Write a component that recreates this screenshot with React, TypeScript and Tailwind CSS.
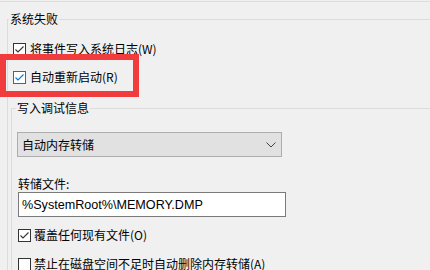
import React from "react";

const cjk = { fontFamily: '"Noto Sans CJK SC", "Noto Sans", sans-serif' };

function Check({ checked, focused }: { checked: boolean; focused?: boolean }) {
  const color = focused ? "#0078d7" : "#333333";
  return (
    <span
      className="flex h-[13px] w-[13px] shrink-0 items-center justify-center border bg-white"
      style={{ borderColor: color }}
    >
      {checked && (
        <svg width="11" height="11" viewBox="0 0 11 11">
          <path d="M1.5 5.5 L4 8 L9.5 2.5" fill="none" stroke={color} strokeWidth="1.1" />
        </svg>
      )}
    </span>
  );
}

export default function App() {
  return (
    <div
      className="relative h-[270px] w-[430px] overflow-hidden bg-[#f0f0f0] text-[12px] leading-[16px] text-black"
      style={cjk}
    >
      <div className="mt-px h-px w-full bg-[#dcdcdc]" />

      <fieldset className="ml-[7px] mt-[9px] w-[600px] border border-[#dcdcdc] pb-10">
        <legend className="ml-[1px] px-[1px] leading-[16px]">系统失败</legend>

        <div className="ml-[5px] mt-[14px] flex h-[16px] items-center gap-[4px]">
          <Check checked />
          <span>将事件写入系统日志(W)</span>
        </div>

        <div className="relative ml-[5px] mt-[12px] flex h-[16px] items-center gap-[4px]">
          <Check checked focused />
          <span>自动重新启动(R)</span>
          <span className="absolute left-[-13px] top-[-15px] h-[43px] w-[139px] border-[6px] border-[#f03c3c]" />
        </div>

        <fieldset className="ml-[3px] mt-[15px] w-[560px] border border-[#dcdcdc] pb-10">
          <legend className="ml-[4px] px-[1px] leading-[16px]">写入调试信息</legend>

          <div className="ml-[5px] mt-[16px] flex h-[25px] w-[265px] items-center justify-between border border-[#adadad] bg-[#e1e1e1] pl-[4px] pr-[4px]">
            <span>自动内存转储</span>
            <svg width="10" height="6" viewBox="0 0 10 6" className="mr-[1px]">
              <path d="M0.5 0.5 L5 5 L9.5 0.5" fill="none" stroke="#444" strokeWidth="1" />
            </svg>
          </div>

          <div className="ml-[6px] mt-[19px] h-[16px]">转储文件:</div>

          <div
            className="ml-[6px] flex h-[25px] w-[268px] items-center border border-[#7a7a7a] bg-white pl-[3px] text-[12.6px]"
            style={{ fontFamily: '"Liberation Sans", Arial, sans-serif' }}
          >
            %SystemRoot%\MEMORY.DMP
          </div>

          <div className="ml-[6px] mt-[10px] flex h-[16px] items-center gap-[3px]">
            <Check checked />
            <span>覆盖任何现有文件(O)</span>
          </div>

          <div className="ml-[6px] mt-[13px] flex h-[16px] items-center gap-[3px]">
            <Check checked={false} />
            <span>禁止在磁盘空间不足时自动删除内存转储(A)</span>
          </div>
        </fieldset>
      </fieldset>
    </div>
  );
}
